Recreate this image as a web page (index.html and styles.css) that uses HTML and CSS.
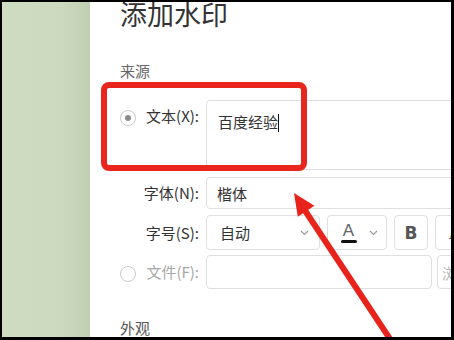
FILE: index.html
```html
<!DOCTYPE html>
<html lang="zh-CN">
<head>
<meta charset="utf-8">
<title>添加水印</title>
<link rel="stylesheet" href="styles.css">
</head>
<body>
<div class="frame">
  <div class="side"></div>
  <div class="dialog">
    <h1 class="title">添加水印</h1>
    <div class="section">来源</div>
    <div class="form">
      <div class="row row-text">
        <div class="lab lab-top"><span class="radio on"></span><span class="lab-text">文本(X):</span></div>
        <div class="textarea"><span class="typed">百度经验</span><span class="caret"></span></div>
      </div>
      <div class="row row-font">
        <div class="lab"><span class="lab-text">字体(N):</span></div>
        <div class="input">楷体</div>
      </div>
      <div class="row row-size">
        <div class="lab"><span class="lab-text">字号(S):</span></div>
        <div class="select"><span>自动</span><svg class="chev" width="9" height="6" viewBox="0 0 9 6"><polyline points="1,1 4.5,4.5 8,1" fill="none" stroke="#9a9a9a" stroke-width="1.2"/></svg></div>
        <div class="btn color"><span class="a-wrap"><span class="a-letter">A</span><span class="a-bar"></span></span><svg class="chev" width="9" height="6" viewBox="0 0 9 6"><polyline points="1,1 4.5,4.5 8,1" fill="none" stroke="#9a9a9a" stroke-width="1.2"/></svg></div>
        <div class="btn bold">B</div>
        <div class="btn italic">I</div>
      </div>
      <div class="row row-file">
        <div class="lab"><span class="radio"></span><span class="lab-text dim">文件(F):</span></div>
        <div class="input file"></div>
        <div class="btn browse">浏览...</div>
      </div>
    </div>
    <div class="section look">外观</div>
  </div>
  <div class="callout"></div>
  <svg class="arrow" width="454" height="340" viewBox="0 0 454 340">
    <line x1="302" y1="206" x2="394" y2="345" stroke="#e8231b" stroke-width="6"/>
    <polygon points="294,193 297.8,216.8 314.4,205.8" fill="#e8231b"/>
  </svg>
</div>
</body>
</html>
```

FILE: styles.css
```css
html, body {
  margin: 0;
  padding: 0;
}
body {
  width: 454px;
  height: 340px;
  overflow: hidden;
  background: #000;
}
.frame {
  position: relative;
  width: 454px;
  height: 340px;
  box-sizing: border-box;
  border: 2px solid #000;
  border-right-width: 3px;
  border-bottom-width: 3px;
  display: flex;
  overflow: hidden;
  font-family: "Noto Sans CJK SC", "Noto Sans", sans-serif;
}
.side {
  width: 88px;
  flex: none;
  background: linear-gradient(to right, #cfdcc1 0%, #ccd9be 70%, #c0ceb1 100%);
}
.dialog {
  flex: 1;
  min-width: 0;
  background: #fff;
  padding-left: 30px;
  overflow: hidden;
}
.title {
  margin: -2px 0 0;
  font-size: 27px;
  line-height: 28px;
  font-weight: normal;
  color: #333;
}
.section {
  margin-top: 33px;
  font-size: 15px;
  line-height: 20px;
  color: #666;
}
.form {
  margin-top: 19px;
  margin-right: -40px;
}
.row {
  display: flex;
  align-items: center;
  column-gap: 7px;
}
.lab {
  width: 79px;
  flex: none;
  display: flex;
  align-items: center;
  height: 20px;
  font-size: 15px;
  line-height: 20px;
  color: #333;
}
.lab-top {
  align-self: flex-start;
  margin-top: 6px;
}
.lab-text {
  margin-left: auto;
  white-space: nowrap;
}
.lab-text.dim {
  color: #a8a8a8;
}
.radio {
  width: 16px;
  height: 16px;
  box-sizing: border-box;
  border: 1px solid #cacaca;
  border-radius: 50%;
  display: flex;
  align-items: center;
  justify-content: center;
  margin-top: 3px;
}
.radio.on::after {
  content: "";
  width: 6px;
  height: 6px;
  border-radius: 50%;
  background: #8c8c8c;
}
.textarea {
  flex: 1;
  height: 70px;
  box-sizing: border-box;
  border: 1px solid #dedede;
  border-radius: 4px;
  padding: 11px 11px;
  font-size: 15px;
  line-height: 20px;
  color: #333;
  display: flex;
  align-items: flex-start;
}
.caret {
  display: inline-block;
  width: 1px;
  height: 18px;
  margin-top: 2px;
  background: #111;
}
.row-font {
  margin-top: 7px;
  height: 32px;
}
.input {
  flex: 1;
  height: 32px;
  box-sizing: border-box;
  border: 1px solid #e0e0e0;
  border-radius: 4px;
  padding: 0 10px;
  display: flex;
  align-items: center;
  font-size: 15px;
  color: #333;
}
.row-size {
  margin-top: 6px;
  height: 35px;
}
.select {
  width: 114px;
  height: 35px;
  flex: none;
  box-sizing: border-box;
  border: 1px solid #e0e0e0;
  border-radius: 4px;
  padding: 0 10px 0 13px;
  display: flex;
  align-items: center;
  justify-content: space-between;
  font-size: 15px;
  color: #333;
}
.btn {
  height: 35px;
  flex: none;
  box-sizing: border-box;
  border: 1px solid #e0e0e0;
  border-radius: 4px;
  display: flex;
  align-items: center;
  justify-content: center;
}
.color {
  width: 60px;
  gap: 12px;
  padding-left: 4px;
}
.a-wrap {
  display: flex;
  flex-direction: column;
  align-items: center;
}
.a-letter {
  font-family: "Liberation Sans", sans-serif;
  font-size: 17px;
  line-height: 17px;
  color: #666;
}
.a-bar {
  width: 16px;
  height: 3px;
  border-radius: 2px;
  background: #111;
  margin-top: 1px;
}
.bold {
  width: 34px;
  font-family: "DejaVu Sans", sans-serif;
  font-weight: bold;
  font-size: 17px;
  color: #555;
}
.italic {
  width: 34px;
  font-family: "Liberation Serif", serif;
  font-style: italic;
  font-size: 19px;
  color: #444;
}
.row-file {
  margin-top: 5px;
  height: 34px;
}
.input.file {
  flex: none;
  width: 226px;
  height: 34px;
}
.browse {
  width: 70px;
  height: 34px;
  margin-left: -2px;
  justify-content: flex-start;
  padding-left: 4px;
  font-size: 15px;
  color: #b8b8b8;
}
.look {
  margin-top: 29px;
  color: #555;
}
.callout {
  position: absolute;
  left: 99px;
  top: 80px;
  width: 206px;
  height: 89px;
  box-sizing: border-box;
  border: 6px solid #e9261d;
  border-radius: 8px;
}
.arrow {
  position: absolute;
  left: -2px;
  top: -2px;
  pointer-events: none;
}
```
